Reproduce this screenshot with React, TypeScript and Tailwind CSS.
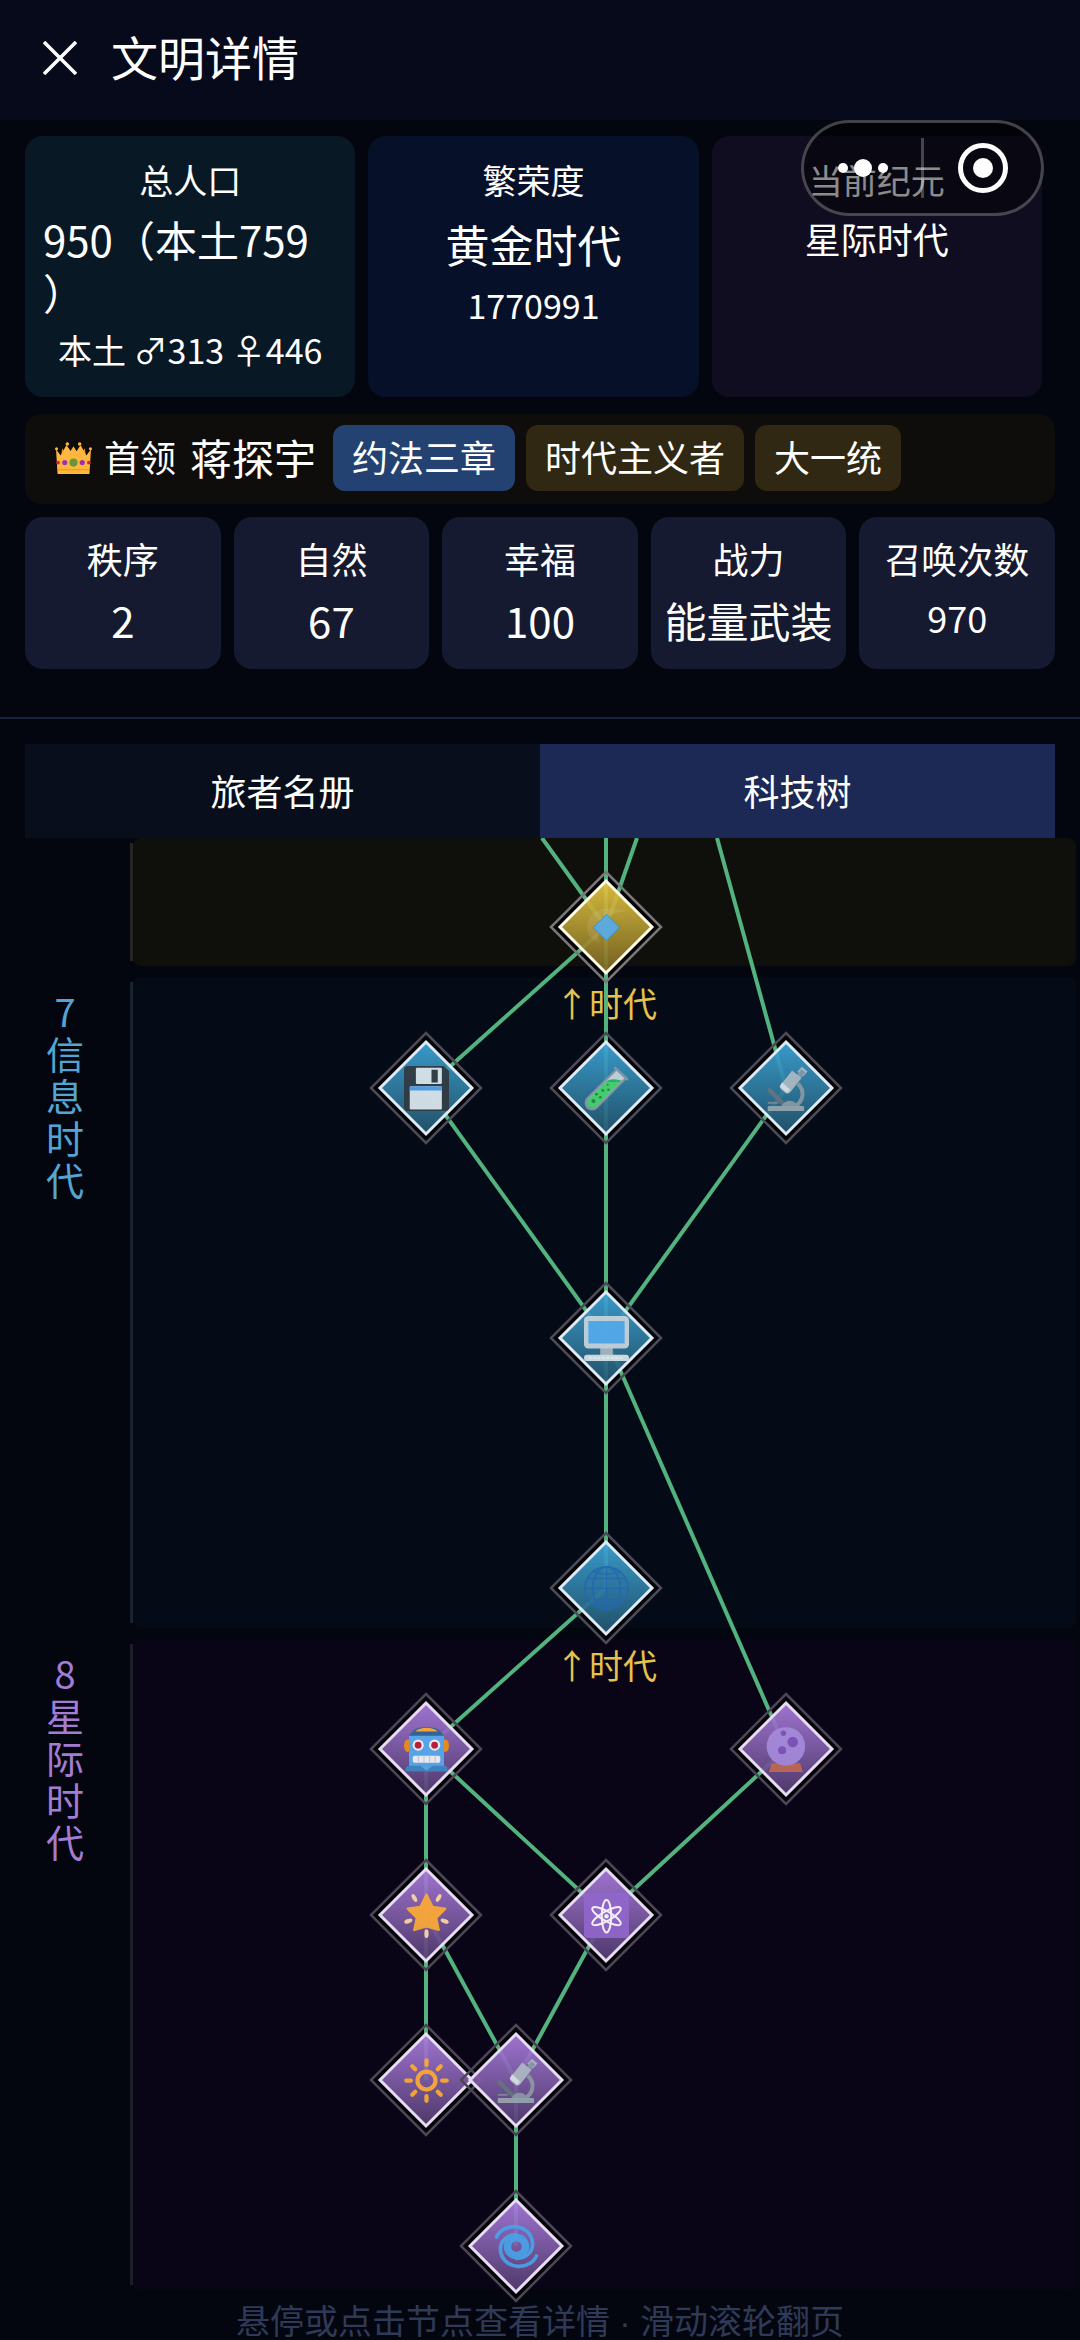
import { useState, type ReactNode } from "react";

type Tone = "gold" | "blue" | "purple";

const tones: Record<Tone, { from: string; to: string; stroke: string; ring: string }> = {
  gold: { from: "#e6c840", to: "#7a6624", stroke: "#fffbe6", ring: "#7a7777" },
  blue: { from: "#3ca5d8", to: "#24566f", stroke: "#dfeaf5", ring: "#4c4b57" },
  purple: { from: "#ab7ce0", to: "#533d70", stroke: "#e8dcf3", ring: "#4d4656" },
};

// x is measured from the middle column, y from the top of the visible tree
const nodes: { id: string; name: string; x: number; y: number; tone: Tone; icon: ReactNode }[] = [
  { id: "core", name: "核心", x: 0, y: 89, tone: "gold", icon: <GemIcon /> },
  { id: "disk", name: "存储", x: -180, y: 250, tone: "blue", icon: <FloppyIcon /> },
  { id: "tube", name: "生物", x: 0, y: 250, tone: "blue", icon: <TubeIcon /> },
  { id: "scope", name: "显微", x: 180, y: 250, tone: "blue", icon: <ScopeIcon /> },
  { id: "computer", name: "计算机", x: 0, y: 500, tone: "blue", icon: <ComputerIcon /> },
  { id: "globe", name: "互联网", x: 0, y: 750, tone: "blue", icon: <GlobeIcon /> },
  { id: "robot", name: "机器人", x: -180, y: 911, tone: "purple", icon: <RobotIcon /> },
  { id: "crystal", name: "水晶球", x: 180, y: 911, tone: "purple", icon: <CrystalIcon /> },
  { id: "star", name: "恒星", x: -180, y: 1077, tone: "purple", icon: <StarIcon /> },
  { id: "atom", name: "原子", x: 0, y: 1077, tone: "purple", icon: <AtomIcon /> },
  { id: "sun", name: "太阳", x: -180, y: 1242, tone: "purple", icon: <SunIcon /> },
  { id: "scope2", name: "观测", x: -90, y: 1242, tone: "purple", icon: <ScopeIcon /> },
  { id: "galaxy", name: "星系", x: -90, y: 1408, tone: "purple", icon: <GalaxyIcon /> },
];

const links = [
  [-64, 0, 0, 89],
  [0, -10, 0, 89],
  [31, 0, 0, 89],
  [111, 0, 180, 250],
  [0, 89, -180, 250],
  [0, 89, 0, 250],
  [-180, 250, 0, 500],
  [0, 250, 0, 500],
  [180, 250, 0, 500],
  [0, 500, 0, 750],
  [0, 500, 180, 911],
  [0, 750, -180, 911],
  [-180, 911, -180, 1077],
  [-180, 911, 0, 1077],
  [180, 911, 0, 1077],
  [-180, 1077, -180, 1242],
  [-180, 1077, -90, 1242],
  [0, 1077, -90, 1242],
  [-90, 1242, -90, 1408],
];

const stats = [
  { label: "秩序", value: "2" },
  { label: "自然", value: "67" },
  { label: "幸福", value: "100" },
  { label: "战力", value: "能量武装" },
  { label: "召唤次数", value: "970", small: true },
];

function Icon({ children }: { children: ReactNode }) {
  return (
    <svg viewBox="0 0 36 36" className="h-[45px] w-[45px] opacity-90" fill="none" aria-hidden="true">
      {children}
    </svg>
  );
}

function GemIcon() {
  return (
    <Icon>
      <path d="M33 5C23 1 6 1 3 14c-2 8 2 15 10 16C8 20 12 8 33 5Z" fill="#fff" opacity=".1" />
      <path d="M18 7.5 28.5 18 18 28.5 7.5 18Z" fill="#55acee" stroke="#3b88c3" strokeWidth=".7" />
    </Icon>
  );
}

function FloppyIcon() {
  return (
    <Icon>
      <path d="M3 0h29l4 4v29a3 3 0 0 1-3 3H3a3 3 0 0 1-3-3V3a3 3 0 0 1 3-3Z" fill="#31373d" />
      <rect x="9.5" y="1.3" width="20.8" height="13" rx="1" fill="#e1e8ed" />
      <rect x="22" y="3" width="5" height="10.2" fill="#31373d" />
      <rect x="4.6" y="16.2" width="25.7" height="18.5" rx="1" fill="#e1e8ed" />
      <path d="M5.6 16.2h23.7a1 1 0 0 1 1 1v2.3H4.6v-2.3a1 1 0 0 1 1-1Z" fill="#55a0e8" />
    </Icon>
  );
}

function TubeIcon() {
  return (
    <Icon>
      <path d="M30 6 6.5 29.5" stroke="#8899a6" strokeWidth="12" />
      <circle cx="6.5" cy="29.5" r="6" fill="#8899a6" />
      <path d="M29.5 6.5 6.5 29.5" stroke="#ccd6dd" strokeWidth="8.5" />
      <path d="M17.5 12.4c4-2 8 .8 13-1L9.5 32.5a4.3 4.3 0 0 1-6-6Z" fill="#47d669" />
      <path d="M17.5 12.5c4-3 9-2 12.5-.5-3 1.5-8 .8-12.5.5Z" fill="#2fb463" />
      <g fill="#1f8a4d">
        <circle cx="7.5" cy="28" r="1.6" />
        <circle cx="13" cy="25" r="1.1" />
        <circle cx="10" cy="22.5" r="1.1" />
        <circle cx="15" cy="19.5" r="1.2" />
        <circle cx="19.5" cy="19" r="1" />
        <circle cx="19" cy="15" r=".8" />
      </g>
      <path d="m25 1.5 9.5 9" stroke="#8899a6" strokeWidth="2.2" strokeLinecap="round" />
    </Icon>
  );
}

function ScopeIcon() {
  return (
    <Icon>
      <path d="M27 14c6 6 5 14-3 19" stroke="#8d9aa3" strokeWidth="3.2" />
      <path d="m4.5 19.5 11 11" stroke="#66757f" strokeWidth="3.4" strokeLinecap="round" />
      <path d="M3 29.5h8" stroke="#7b8992" strokeWidth="1.6" />
      <path d="M14 33c1-7 12-7 13 0Z" fill="#8d9aa3" />
      <path d="M4 32h27a1 1 0 0 1 1 1v3H3v-3a1 1 0 0 1 1-1Z" fill="#99a8b2" />
      <path d="m28.5 2.5 4.5 4" stroke="#aab8c2" strokeWidth="5.5" strokeLinejoin="round" />
      <path d="m31.5 4-6.5 8" stroke="#8899a6" strokeWidth="4" />
      <path d="m22.5 3.5 7.5 6-9 11.5a3 3 0 0 1-4 .3l-3-2.3a3 3 0 0 1-.5-4Z" fill="#aebbc4" />
      <path d="m14.5 13 6.5 6-2.5 2.5-6-5Z" fill="#dde5ea" />
    </Icon>
  );
}

function ComputerIcon() {
  return (
    <Icon>
      <path d="M13 25h10v7H13z" fill="#aab8c2" />
      <rect width="36" height="26" rx="3.5" fill="#ccd6dd" />
      <rect x="3.5" y="4" width="29" height="18" fill="#55acee" />
      <rect y="31" width="36" height="5" rx="2.5" fill="#dde5eb" />
      <path d="M4 33.5h28" stroke="#f5f8fa" strokeWidth="1.5" strokeDasharray="2 1.5" />
    </Icon>
  );
}

function GlobeIcon() {
  return (
    <Icon>
      <circle cx="18" cy="18" r="17.3" fill="#2a76ad" fillOpacity=".35" />
      <g stroke="#2468ad" strokeWidth="1.3">
        <circle cx="18" cy="18" r="17.3" />
        <ellipse cx="18" cy="18" rx="11" ry="17.3" />
        <path d="M18 1v34M1 18h34M3 10h30M3 27h30M8 4.5c6 3 14 3 20 0M8 31.5c6-3 14-3 20 0" />
      </g>
    </Icon>
  );
}

function RobotIcon() {
  return (
    <Icon>
      <ellipse cx="3" cy="15" rx="3" ry="5" fill="#f4900c" />
      <ellipse cx="33" cy="15" rx="3" ry="5" fill="#f4900c" />
      <path d="M4 9c1-6 6-9 14-9s13 3 14 9Z" fill="#31628c" />
      <path d="M9 3.5C13-.5 23-.5 27 3.5Z" fill="#ffac33" />
      <path d="M4 6h28v26H4z" fill="#55acee" />
      <path d="M4 6c8-2 20-2 28 0v1H4Z" fill="#226699" />
      <path d="M4 31h28c2 0 3 1.5 3 4.5H1c0-3 1-4.5 3-4.5Z" fill="#3b88c3" />
      <path d="M13 31h10l-5 4Z" fill="#55acee" />
      <circle cx="11.3" cy="14.5" r="4.5" fill="#f5f8fa" />
      <circle cx="24.5" cy="14.5" r="4.5" fill="#f5f8fa" />
      <circle cx="11.3" cy="14.5" r="2.7" fill="#be1931" />
      <circle cx="24.5" cy="14.5" r="2.7" fill="#be1931" />
      <rect x="7" y="23" width="22" height="5.5" rx="1.5" fill="#f5f8fa" />
      <path d="M11.5 23v5.5M16 23v5.5M20.5 23v5.5M25 23v5.5" stroke="#ccd6dd" />
    </Icon>
  );
}

function CrystalIcon() {
  return (
    <Icon>
      <path d="M6 29h23l2 7H4Z" fill="#c1694f" />
      <circle cx="17.5" cy="15.5" r="15.4" fill="#a78bdc" />
      <g fill="#7d52b8">
        <circle cx="15.5" cy="5" r="2.2" />
        <circle cx="23" cy="12" r="4.2" />
        <circle cx="14.5" cy="18.5" r="3.2" />
      </g>
    </Icon>
  );
}

function StarIcon() {
  return (
    <Icon>
      <path
        d="m18 1.5 4.8 9.7 10.2 1.3-7.3 7.5 2 9.5-9.7-2.8-9.7 2.8 2-9.5L3 12.5l10.2-1.3Z"
        fill="#ffac33"
        stroke="#ffac33"
        strokeWidth="2"
        strokeLinejoin="round"
      />
      <g fill="#ffd9a3">
        <ellipse cx="8.3" cy="4" rx="1.7" ry="3.4" transform="rotate(-30 8.3 4)" />
        <ellipse cx="27.7" cy="4" rx="1.7" ry="3.4" transform="rotate(30 27.7 4)" />
        <ellipse cx="3.5" cy="22.5" rx="1.7" ry="3.4" transform="rotate(72 3.5 22.5)" />
        <ellipse cx="32.5" cy="22.5" rx="1.7" ry="3.4" transform="rotate(-72 32.5 22.5)" />
        <ellipse cx="18" cy="32.5" rx="1.7" ry="3.5" />
      </g>
    </Icon>
  );
}

function AtomIcon() {
  return (
    <Icon>
      <rect width="36" height="36" rx="3" fill="#9266cc" />
      <g stroke="#fff" strokeWidth="1.6">
        <ellipse cx="18" cy="18.5" rx="3.8" ry="13" />
        <ellipse cx="18" cy="18.5" rx="3.8" ry="13" transform="rotate(60 18 18.5)" />
        <ellipse cx="18" cy="18.5" rx="3.8" ry="13" transform="rotate(120 18 18.5)" />
      </g>
      <circle cx="18" cy="18.5" r="1.8" fill="#fff" />
    </Icon>
  );
}

function SunIcon() {
  return (
    <Icon>
      <g stroke="#ffac33" strokeWidth="3.4" strokeLinecap="round">
        <circle cx="18" cy="18" r="7.2" />
        <path d="M18 1.8v3.7M18 30.5v3.7M1.8 18h3.7M30.5 18h3.7M6.6 6.6l2.4 2.4M27 27l2.4 2.4M6.6 29.4 9 27M27 9l2.4-2.4" />
      </g>
    </Icon>
  );
}

function GalaxyIcon() {
  return (
    <Icon>
      <g stroke="#48a4ea" strokeLinecap="round">
        <circle cx="18" cy="18" r="7.2" strokeWidth="6" />
        <path d="M2 10.5C7-1 27-1 30.5 13c2 9-5 14.5-12.5 14.5" strokeWidth="3" />
        <path d="M34 25.5C29 37 9 37 5.5 23c-2-9 5-14.5 12.5-14.5" strokeWidth="3" />
      </g>
    </Icon>
  );
}

function CrownIcon() {
  return (
    <svg viewBox="0 0 36 32" className="h-[33px] w-[37px]" aria-hidden="true">
      <path d="m6 14 1-8 3 5 2-7 4 6h5l3-6 2 7 3-5 1 8Z" fill="#f4900c" />
      <path d="M2.5 31 1 7l4.5 6L11 3l4 6 3-5 3 5 4-6 5.500 10L35 7l-1.500 24Z" fill="#ffb83d" />
      <g fill="#ffb83d">
        <circle cx="1.5" cy="6.5" r="1.5" />
        <circle cx="12" cy="2" r="1.7" />
        <circle cx="24" cy="2" r="1.7" />
        <circle cx="34.5" cy="6.5" r="1.5" />
      </g>
      <path d="M2.5 27h31" stroke="#f4900c" strokeWidth="1" />
      <circle cx="18" cy="20" r="4" fill="#6b953b" />
      <circle cx="9.5" cy="20" r="2.5" fill="#9b30b0" />
      <circle cx="26.5" cy="20" r="2.5" fill="#9b30b0" />
      <circle cx="3" cy="20" r="1.8" fill="#d0243c" />
      <circle cx="33" cy="20" r="1.8" fill="#d0243c" />
    </svg>
  );
}

function Era({ label, labelClass, lineClass, bandClass }: {
  label?: string;
  labelClass?: string;
  lineClass: string;
  bandClass: string;
}) {
  return (
    <section className="flex">
      <div className="flex w-[130px] shrink-0 justify-center pt-[13px]">
        {label && (
          <h2 className={`w-[38px] text-center text-[38px] leading-[42px] break-all ${labelClass}`}>{label}</h2>
        )}
      </div>
      <div className={`my-[5px] w-[3px] shrink-0 ${lineClass}`} />
      <div className={`mr-1 flex-1 rounded-lg ${bandClass}`} />
    </section>
  );
}

function TechTree() {
  return (
    <div className="relative flex-1 overflow-hidden">
      <div className="flex flex-col gap-[11px]">
        <Era lineClass="bg-[#26251f]" bandClass="h-[128px] bg-[#0f0f0b]" />
        <Era label="7信息时代" labelClass="text-[#54a4d4]" lineClass="bg-[#18232e]" bandClass="h-[651px] bg-[#040b17]" />
        <Era label="8星际时代" labelClass="text-[#a37cd3]" lineClass="bg-[#1e1b2b]" bandClass="h-[651px] bg-[#0a0516]" />
      </div>

      {/* Main menu showing faintly through the overlay */}
      <div className="absolute bottom-[30px] left-[27px] flex flex-col gap-[22px] text-[44px] leading-[88px] text-white/[0.02]" aria-hidden="true">
        <span className="px-[36px]">神阶</span>
        <span className="px-[36px]">文明</span>
        <span className="px-[36px]">视野</span>
      </div>

      {/* Links and nodes are laid around the middle column */}
      <div className="absolute top-0 right-0 left-[132px]">
        <div className="absolute top-0 left-1/2">
          <span className="absolute top-[142px] -left-[51px] w-[102px] text-[34px] leading-[46px] whitespace-nowrap text-[#e6c24c]">
            ↑时代
          </span>
          <span className="absolute top-[804px] -left-[51px] w-[102px] text-[34px] leading-[46px] whitespace-nowrap text-[#e6c24c]">
            ↑时代
          </span>
          <svg className="absolute top-0 left-0 h-px w-px overflow-visible" aria-hidden="true">
            {nodes.map((n) => (
              <path key={n.id} d={`M${n.x} ${n.y - 55}l55 55-55 55-55-55Z`} fill="#020207" />
            ))}
            {links.map(([x1, y1, x2, y2], i) => (
              <line key={i} x1={x1} y1={y1} x2={x2} y2={y2} stroke="#52b37f" strokeWidth="4" />
            ))}
          </svg>
          {nodes.map((n) => (
            <button
              key={n.id}
              type="button"
              aria-label={n.name}
              className="absolute flex h-28 w-28 -translate-x-1/2 -translate-y-1/2 items-center justify-center"
              style={{ left: n.x, top: n.y }}
            >
              <svg viewBox="-56 -56 112 112" className="absolute inset-0 h-full w-full overflow-visible" aria-hidden="true">
                <defs>
                  <linearGradient id={`fill-${n.id}`} x1="0" y1="0" x2="0" y2="1">
                    <stop offset="0" stopColor={tones[n.tone].from} />
                    <stop offset="1" stopColor={tones[n.tone].to} />
                  </linearGradient>
                </defs>
                <path d="M0-55 55 0 0 55-55 0Z" fill="none" stroke={tones[n.tone].ring} strokeWidth="2.5" />
                <path d="M0-46 46 0 0 46-46 0Z" fill={`url(#fill-${n.id})`} fillOpacity=".93" stroke={tones[n.tone].stroke} strokeWidth="3" />
              </svg>
              <span className="relative">{n.icon}</span>
            </button>
          ))}
        </div>
      </div>

      <p className="absolute inset-x-0 bottom-0 text-center text-[34px] leading-[36px] text-[#2f3a58]">
        悬停或点击节点查看详情<span className="font-['Liberation_Sans'] whitespace-pre"> · </span>滑动滚轮翻页
      </p>
    </div>
  );
}

export default function App() {
  const [tab, setTab] = useState("tech");

  return (
    <div className="relative flex h-screen flex-col overflow-hidden bg-[#04060f] font-['Noto_Sans_CJK_SC',sans-serif] text-white">
      {/* Header */}
      <header className="flex h-[120px] shrink-0 items-center gap-[34px] bg-[#070a1a] pb-1 pl-[43px]">
        <button type="button" aria-label="关闭">
          <svg viewBox="0 0 34 34" className="h-[34px] w-[34px]" stroke="currentColor" strokeWidth="3.5" aria-hidden="true">
            <path d="m1 1 32 32M33 1 1 33" />
          </svg>
        </button>
        <h1 className="pb-1 text-[47px] leading-[60px]">文明详情</h1>
      </header>

      {/* Mini program capsule */}
      <div className="absolute top-[120px] right-[36px] z-10 flex h-24 w-[243px] items-center rounded-full border-[3px] border-white/25 bg-black/45">
        <button type="button" aria-label="更多" className="flex flex-1 items-center justify-center gap-[6px]">
          <span className="h-[10px] w-[10px] rounded-full bg-white" />
          <span className="h-[18px] w-[18px] rounded-full bg-white" />
          <span className="h-[10px] w-[10px] rounded-full bg-white" />
        </button>
        <span className="h-[60px] w-[3px] bg-white/25" />
        <button type="button" aria-label="关闭小程序" className="flex flex-1 items-center justify-center">
          <span className="flex h-[50px] w-[50px] items-center justify-center rounded-full border-[5px] border-white">
            <span className="h-5 w-5 rounded-full bg-white" />
          </span>
        </button>
      </div>

      {/* Summary */}
      <section className="mx-[25px] mt-4 flex flex-col">
        <div className="mr-[13px] grid grid-cols-3 gap-[13px] text-center text-[34px]">
          <div className="rounded-[18px] bg-[#081824] px-[18px] pt-[18px] pb-6">
            <p className="leading-[52px]">总人口</p>
            <p className="mt-[6px] text-left text-[42px] leading-[53px]">
              950（本土759
              <br />）
            </p>
            <p className="mt-[9px] leading-[46px] whitespace-nowrap">本土 ♂313 ♀446</p>
          </div>
          <div className="rounded-[18px] bg-[#071029] px-[18px] pt-[18px]">
            <p className="leading-[52px]">繁荣度</p>
            <p className="mt-[6px] text-[44px] leading-[64px]">黄金时代</p>
            <p className="mt-[6px] leading-[46px]">1770991</p>
          </div>
          <div className="rounded-[18px] bg-[#110d21] px-[18px] pt-[18px]">
            <p className="leading-[52px]">当前纪元</p>
            <p className="mt-[6px] text-[36px] leading-[52px]">星际时代</p>
          </div>
        </div>

        <div className="mt-[17px] flex h-[90px] items-center rounded-2xl bg-[#0f0d0b] pb-[2px] pl-[30px] text-[36px]">
          <CrownIcon />
          <span className="ml-3 pb-1">首领</span>
          <span className="mr-[17px] ml-[14px] pb-1 text-[42px]">蒋探宇</span>
          <div className="flex gap-[11px] leading-[62px]">
            <span className="rounded-xl bg-[#234272] px-[19px] pb-1">约法三章</span>
            <span className="rounded-xl bg-[#312813] px-[19px] pb-1">时代主义者</span>
            <span className="rounded-xl bg-[#312813] px-[19px] pb-1">大一统</span>
          </div>
        </div>

        <div className="mt-[13px] grid grid-cols-5 gap-[13px] text-center">
          {stats.map((stat) => (
            <div key={stat.label} className="rounded-[18px] bg-[#161a30] pt-4 pb-[18px]">
              <p className="text-[36px] leading-[50px]">{stat.label}</p>
              <p className={stat.small ? "mt-[6px] text-[36px] leading-[56px]" : "mt-[6px] text-[42px] leading-[62px]"}>
                {stat.value}
              </p>
            </div>
          ))}
        </div>
      </section>

      <hr className="mt-[48px] border-t-2 border-[#18233d]" />

      {/* Tabs */}
      <div role="tablist" className="mx-[25px] mt-[25px] flex shrink-0 text-[36px] leading-[92px]">
        <button
          type="button"
          role="tab"
          aria-selected={tab === "roster"}
          onClick={() => setTab("roster")}
          className={`flex-1 pb-[2px] ${tab === "roster" ? "bg-[#1b2954]" : "bg-[#090e1c]"}`}
        >
          旅者名册
        </button>
        <button
          type="button"
          role="tab"
          aria-selected={tab === "tech"}
          onClick={() => setTab("tech")}
          className={`flex-1 pb-[2px] ${tab === "tech" ? "bg-[#1b2954]" : "bg-[#090e1c]"}`}
        >
          科技树
        </button>
      </div>

      <TechTree />
    </div>
  );
}
